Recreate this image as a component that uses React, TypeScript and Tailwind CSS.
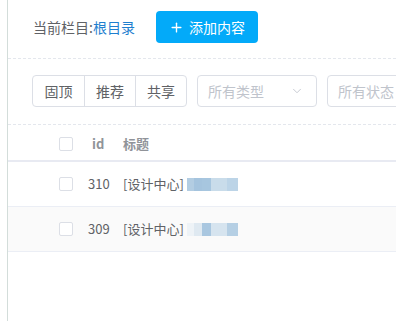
import { ChevronDown, Plus } from "lucide-react";

const FONT = "font-['Noto_Sans_CJK_SC','Noto_Sans',sans-serif]";

type Row = { id: number; title: string; blur: string[]; second?: boolean };

const ROWS: Row[] = [
  { id: 310, title: "[设计中心]", blur: ["#b3cde2", "#a5c4de", "#a7c6df", "#c9dcea", "#bcd4e7"] },
  { id: 309, title: "[设计中心]", blur: ["#eef3f7", "#dfe9f1", "#a9c7e0", "#d6e4ef", "#b5cfe4"], second: true },
];

function Checkbox() {
  return <span className="block shrink-0 w-[14px] h-[14px] rounded-[2px] border border-[#dcdfe6] bg-white" />;
}

export default function App() {
  return (
    <div className={`${FONT} h-[321px] w-[396px] overflow-hidden bg-white`}>
      <div className="ml-[7px] h-full border-l border-[#d3ddda]">
        <div className="flex items-center pl-[25px] pt-[11px] pb-[15px] border-b border-dashed border-[#e4e7ed]">
          <span className="text-[14px] text-[#606266]">
            当前栏目:<span className="text-[#1f7fcf]">根目录</span>
          </span>
          <button className="ml-[21px] flex items-center gap-[5px] h-[32px] px-[13px] rounded-[4px] bg-[#03aaf9] text-white text-[14px]">
            <Plus size={15} strokeWidth={2.2} />
            添加内容
          </button>
        </div>

        <div className="flex items-center pl-[24px] pt-[16px] pb-[17px] border-b border-dashed border-[#e4e7ed] whitespace-nowrap overflow-hidden">
          <div className="flex shrink-0 h-[32px] rounded-[4px] border border-[#dcdfe6] text-[14px] text-[#606266]">
            <span className="w-[51px] flex items-center justify-center">固顶</span>
            <span className="w-[51px] flex items-center justify-center border-l border-[#dcdfe6]">推荐</span>
            <span className="w-[51px] flex items-center justify-center border-l border-[#dcdfe6]">共享</span>
          </div>
          <div className="ml-[10px] shrink-0 flex items-center justify-between w-[120px] h-[32px] pl-[10px] pr-[12px] rounded-[4px] border border-[#dcdfe6] text-[14px] text-[#c0c4cc]">
            所有类型
            <ChevronDown size={14} strokeWidth={1.5} className="text-[#c0c4cc]" />
          </div>
          <div className="ml-[10px] shrink-0 flex items-center w-[120px] h-[32px] pl-[10px] rounded-[4px] border border-[#dcdfe6] text-[14px] text-[#c0c4cc]">
            所有状态
          </div>
        </div>

        <div className="text-[13px]">
          <div className="flex items-center h-[37px] pt-[2px] border-b-2 border-[#e8eaf2] text-[#909399]">
            <div className="pl-[51px]" />
            <Checkbox />
            <span className="ml-[19px] font-bold w-[31px]">id</span>
            <span className="font-semibold">标题</span>
          </div>
          {ROWS.map((r) => (
            <div
              key={r.id}
              className={`flex items-center h-[45px] border-b border-[#ebeef5] text-[#606266] ${r.second ? "bg-[#fafafa]" : "bg-white"}`}
            >
              <div className="pl-[51px]" />
              <Checkbox />
              <span className="ml-[15px] w-[35px]">{r.id}</span>
              <span>{r.title}</span>
              <span className="ml-[3px] flex h-[13px]">
                <span className="w-[7px]" style={{ background: r.blur[0] }} />
                <span className="w-[8px]" style={{ background: r.blur[1] }} />
                <span className="w-[9px]" style={{ background: r.blur[2] }} />
                <span className="w-[16px]" style={{ background: r.blur[3] }} />
                <span className="w-[11px]" style={{ background: r.blur[4] }} />
              </span>
            </div>
          ))}
        </div>
      </div>
    </div>
  );
}
